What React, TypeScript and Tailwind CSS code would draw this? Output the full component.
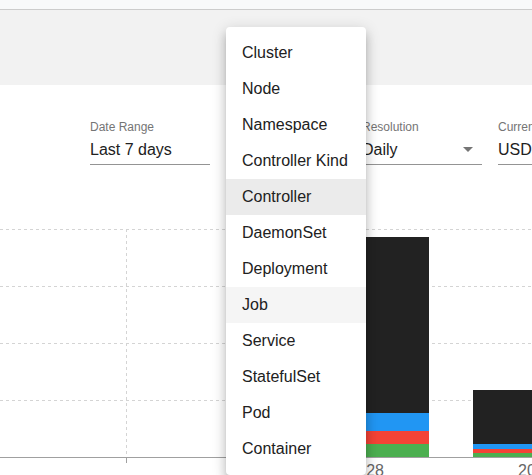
import React from "react";

const items = [
  "Cluster",
  "Node",
  "Namespace",
  "Controller Kind",
  "Controller",
  "DaemonSet",
  "Deployment",
  "Job",
  "Service",
  "StatefulSet",
  "Pod",
  "Container",
];

function Field({ label, value, arrow }: { label: string; value: string; arrow?: boolean }) {
  return (
    <div className="w-[120px] shrink-0">
      <div className="text-[12px] leading-[14px] text-[#757575]">{label}</div>
      <div className="mt-[6px] flex items-center justify-between border-b border-[#949494] pb-[5px]">
        <span className="text-[16px] leading-[19px] text-[#212121]">{value}</span>
        {arrow && (
          <svg width="10" height="5" viewBox="0 0 10 5" className="mr-[9px]">
            <path d="M0 0 L10 0 L5 5 Z" fill="#757575" />
          </svg>
        )}
      </div>
    </div>
  );
}

function Chart() {
  const grid = [9, 66, 123, 180];
  return (
    <svg width="532" height="255" className="block">
      {grid.map((y) => (
        <line key={y} x1="0" x2="532" y1={y + 0.5} y2={y + 0.5} stroke="#d4d4d4" strokeDasharray="3 3" />
      ))}
      {[126, 343, 559].map((x) => (
        <line key={x} x1={x + 0.5} x2={x + 0.5} y1="9" y2="237" stroke="#d4d4d4" strokeDasharray="3 3" />
      ))}
      <rect x="257" y="17" width="172" height="176" fill="#222222" />
      <rect x="257" y="193" width="172" height="18" fill="#2196f3" />
      <rect x="257" y="211" width="172" height="13" fill="#f44336" />
      <rect x="257" y="224" width="172" height="13" fill="#4caf50" />
      <rect x="473" y="170" width="172" height="54" fill="#222222" />
      <rect x="473" y="224" width="172" height="5" fill="#2196f3" />
      <rect x="473" y="229" width="172" height="4" fill="#f44336" />
      <rect x="473" y="233" width="172" height="4" fill="#4caf50" />
      <line x1="0" x2="532" y1="237.5" y2="237.5" stroke="#a0a0a0" />
      {[126, 343, 559].map((x) => (
        <line key={"t" + x} x1={x + 0.5} x2={x + 0.5} y1="237" y2="243" stroke="#a0a0a0" />
      ))}
      <text x="343" y="256" textAnchor="middle" fontSize="16" fill="#666" fontFamily="Liberation Sans, Arial, sans-serif">2024-07-28</text>
      <text x="559" y="256" textAnchor="middle" fontSize="16" fill="#666" fontFamily="Liberation Sans, Arial, sans-serif">2024-07-29</text>
    </svg>
  );
}

export default function App() {
  return (
    <div
      className="relative h-[475px] w-[532px] overflow-hidden bg-white"
      style={{ fontFamily: '"Liberation Sans", Arial, sans-serif' }}
    >
      <div className="h-[10px] border-b border-[#cccccc] bg-[#f8f9fa]" />
      <div className="h-[75px] bg-[#f2f2f2]" />
      <div className="flex gap-4 pl-[90px] pt-[35px]">
        <Field label="Date Range" value="Last 7 days" />
        <div className="w-[120px] shrink-0" />
        <Field label="Resolution" value="Daily" arrow />
        <Field label="Currency" value="USD" arrow />
      </div>
      <div className="mt-[55px]">
        <Chart />
      </div>

      <div className="absolute left-[226px] top-[27px] w-[140px] rounded bg-white py-2 shadow-[0px_5px_5px_-3px_rgba(0,0,0,0.2),0px_8px_10px_1px_rgba(0,0,0,0.14),0px_3px_14px_2px_rgba(0,0,0,0.12)]">
        {items.map((it) => (
          <div
            key={it}
            className={
              "flex h-9 items-center px-4 text-[16px] text-[#212121] " +
              (it === "Controller" ? "bg-[#ebebeb]" : it === "Job" ? "bg-[#f5f5f5]" : "")
            }
          >
            {it}
          </div>
        ))}
      </div>
    </div>
  );
}
